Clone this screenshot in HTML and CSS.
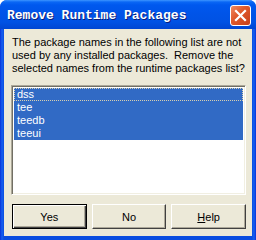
FILE: index.html
```html
<!DOCTYPE html>
<html>
<head>
<meta charset="UTF-8">
<title>Remove Runtime Packages</title>
<link rel="stylesheet" href="styles.css">
</head>
<body>
	<div class="window">
		<div class="titlebar">
			<span class="title">Remove Runtime Packages</span>
			<span class="close">
				<svg width="13" height="13" viewBox="0 0 13 13">
					<path d="M2 2 L11 11 M11 2 L2 11" stroke="#fff" stroke-width="2.2" stroke-linecap="square"/>
				</svg>
			</span>
		</div>
		<div class="client">
			<p class="message">The package names in the following list are not<br>used by any installed packages.&nbsp; Remove the<br>selected names from the runtime packages list?</p>
			<div class="listbox">
				<div class="item selected focused">dss</div>
				<div class="item selected">tee</div>
				<div class="item selected">teedb</div>
				<div class="item selected">teeui</div>
			</div>
			<div class="buttons">
				<button class="btn default">Yes</button>
				<button class="btn">No</button>
				<button class="btn"><u>H</u>elp</button>
			</div>
		</div>
	</div>
</body>
</html>
```

FILE: styles.css
```css
body {
	margin: 0;
	width: 256px;
	height: 240px;
	overflow: hidden;
	background: #fff;
	font-family: "Liberation Sans", Arial, sans-serif;
	font-size: 11px;
}

.window {
	width: 256px;
	height: 240px;
	box-sizing: border-box;
	padding: 0 4px 4px 4px;
	background: linear-gradient(to right, #0831D9, #1660F0 2px, #0A4DE0 4px, #0A4DE0 252px, #1660F0 254px, #0831D9);
	border-radius: 7px 7px 0 0;
	display: flex;
	flex-direction: column;
}

.titlebar {
	height: 29px;
	margin: 0 -4px;
	padding: 0 5px 0 7px;
	border-radius: 7px 7px 0 0;
	background: linear-gradient(#3D95FF 0, #0A67F5 2px, #0058EE 5px, #0054E8 14px, #0052E4 22px, #0046D2 29px);
	display: flex;
	align-items: center;
	justify-content: space-between;
}

.title {
	color: #fff;
	font-family: "Liberation Mono", "Courier New", monospace;
	font-weight: bold;
	font-size: 13px;
	text-shadow: 1px 1px #0A1E7A;
	margin-top: 2px;
}

.close {
	width: 19px;
	height: 19px;
	border: 1px solid #fff;
	border-radius: 3px;
	background: linear-gradient(135deg, #F08A62, #E05A2C 40%, #C8401A);
	display: flex;
	align-items: center;
	justify-content: center;
	margin-top: 1px;
}

.client {
	flex: 1;
	background: #ECE9D8;
	padding: 7px 6px 0 7px;
}

.message {
	margin: 0 0 0 1px;
	line-height: 13px;
	color: #000;
	white-space: nowrap;
}

.listbox {
	margin-top: 10px;
	width: 235px;
	height: 110px;
	box-sizing: border-box;
	background: #fff;
	border: 1px solid;
	border-color: #ACA899 #fff #fff #ACA899;
	box-shadow: inset 1px 1px #716F64, inset -1px -1px #F1EFE2;
	padding: 2px 2px;
}

.item {
	height: 13px;
	line-height: 13px;
	padding-left: 3px;
	color: #000;
}

.selected {
	background: #316AC5;
	color: #fff;
}

.focused {
	outline: 1px dotted #D8D0B0;
	outline-offset: -1px;
}

.buttons {
	display: flex;
	gap: 5px;
	margin-top: 9px;
	padding-left: 1px;
}

.btn {
	width: 75px;
	height: 25px;
	background: #ECE9D8;
	font-family: "Liberation Sans", Arial, sans-serif;
	font-size: 11px;
	color: #000;
	border: 1px solid;
	border-color: #fff #404040 #404040 #fff;
	box-shadow: inset -1px -1px #ACA899;
	padding: 0;
}

.default {
	border-color: #000;
	box-shadow: inset 1px 1px #fff, inset -1px -1px #404040, inset -2px -2px #ACA899;
}
```
